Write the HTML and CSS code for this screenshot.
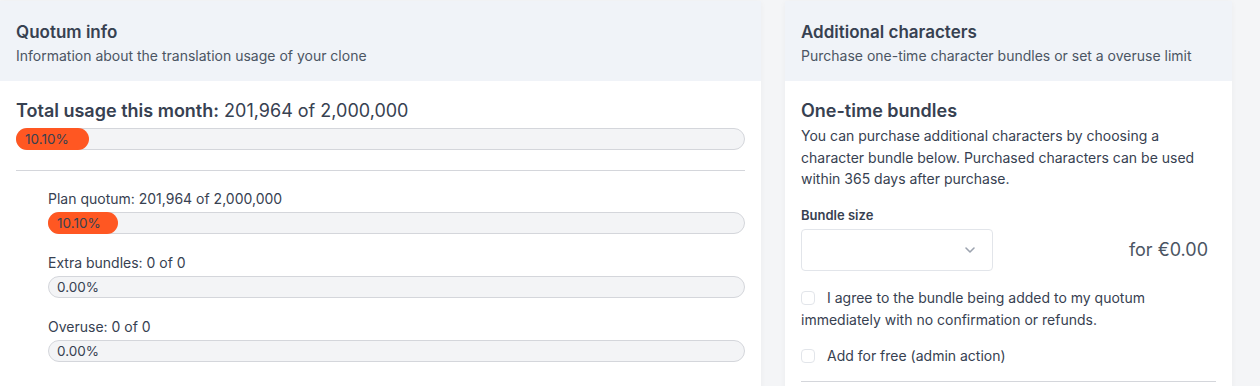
FILE: index.html
```html
<!DOCTYPE html>
<html lang="en">
<head>
<meta charset="utf-8">
<title>Quotum</title>
<link rel="stylesheet" href="styles.css">
</head>
<body>
<div class="page">
  <section class="card card-left">
    <header class="card-head">
      <h2 class="card-title">Quotum info</h2>
      <p class="card-sub">Information about the translation usage of your clone</p>
    </header>
    <div class="card-body">
      <div class="total"><strong>Total usage this month:</strong> 201,964 of 2,000,000</div>
      <div class="bar"><div class="fill" style="width:10.10%"></div><span class="bar-label">10.10%</span></div>
      <hr class="divider">
      <div class="sub-list">
        <div class="sub-item">
          <div class="sub-label">Plan quotum: 201,964 of 2,000,000</div>
          <div class="bar"><div class="fill" style="width:10.10%"></div><span class="bar-label">10.10%</span></div>
        </div>
        <div class="sub-item">
          <div class="sub-label">Extra bundles: 0 of 0</div>
          <div class="bar"><span class="bar-label">0.00%</span></div>
        </div>
        <div class="sub-item">
          <div class="sub-label">Overuse: 0 of 0</div>
          <div class="bar"><span class="bar-label">0.00%</span></div>
        </div>
      </div>
    </div>
  </section>
  <section class="card card-right">
    <header class="card-head">
      <h2 class="card-title">Additional characters</h2>
      <p class="card-sub">Purchase one-time character bundles or set a overuse limit</p>
    </header>
    <div class="card-body">
      <h3 class="section-title">One-time bundles</h3>
      <p class="section-text">You can purchase additional characters by choosing a character bundle below. Purchased characters can be used within 365 days after purchase.</p>
      <label class="field-label">Bundle size</label>
      <div class="select-row">
        <div class="select">
          <svg class="chev" width="12" height="8" viewBox="0 0 12 8"><path d="M2 2l4 4 4-4" fill="none" stroke="#9ca3af" stroke-width="1.6" stroke-linecap="round" stroke-linejoin="round"/></svg>
        </div>
        <div class="price">for €0.00</div>
      </div>
      <p class="check-line"><span class="checkbox"></span>I agree to the bundle being added to my quotum immediately with no confirmation or refunds.</p>
      <p class="check-line check-second"><span class="checkbox"></span>Add for free (admin action)</p>
      <hr class="divider bottom-divider">
    </div>
  </section>
</div>
</body>
</html>
```
FILE: styles.css
```css
* { box-sizing: border-box; }
html, body { margin: 0; padding: 0; }
body {
  background: #f4f5f7;
  font-family: Inter, "Noto Sans", "Liberation Sans", sans-serif;
  color: #374151;
  height: 386px;
  overflow: hidden;
}
.page {
  display: flex;
  gap: 24px;
  padding-top: 1px;
  align-items: flex-start;
}
.card {
  background: #fff;
  box-shadow: 0 1px 6px rgba(0,0,0,0.04);
  height: 400px;
}
.card-left { width: 761px; flex: none; }
.card-right { width: 447px; flex: none; }
.card-head {
  background: #f0f3f8;
  padding: 19px 16px 0;
  height: 80px;
}
.card-title {
  margin: 0;
  font-size: 17px;
  line-height: 24px;
  font-weight: 600;
  color: #374151;
}
.card-sub {
  margin: 2px 0 0;
  font-size: 14px;
  line-height: 20px;
  color: #4b5563;
}
.card-body { padding: 16px 16px 16px; }
.total {
  font-size: 18px;
  line-height: 28px;
  color: #374151;
}
.total strong { font-weight: 600; }
.bar {
  position: relative;
  height: 22px;
  margin-top: 3px;
  background: #f3f4f6;
  border: 1px solid #d4d6db;
  border-radius: 11px;
  display: flex;
  align-items: center;
}
.fill {
  position: absolute;
  left: -1px;
  top: -1px;
  bottom: -1px;
  background: #ff5722;
  border-radius: 11px;
}
.bar-label {
  position: relative;
  padding-left: 8px;
  font-size: 13.5px;
  line-height: 20px;
  color: #374151;
}
.divider {
  border: 0;
  border-top: 1px solid #d4d6db;
  margin: 20px 0 0;
}
.sub-list { padding-left: 32px; }
.sub-item { padding-top: 18px; }
.sub-item + .sub-item { padding-top: 19px; }
.sub-label {
  font-size: 14px;
  line-height: 20px;
  color: #374151;
}
.section-title {
  margin: 0;
  font-size: 18px;
  line-height: 28px;
  font-weight: 600;
  color: #374151;
}
.section-text {
  margin: 0;
  font-size: 14px;
  line-height: 21.5px;
  color: #374151;
}
.field-label {
  display: block;
  margin-top: 15px;
  font-size: 13px;
  line-height: 20px;
  font-weight: 600;
  color: #374151;
}
.select-row {
  margin-top: 4px;
  display: flex;
  align-items: center;
  justify-content: space-between;
}
.select {
  width: 192px;
  height: 42px;
  border: 1px solid #e2e5ea;
  border-radius: 4px;
  display: flex;
  align-items: center;
  justify-content: flex-end;
  padding-right: 16px;
}
.chev { display: block; }
.price {
  font-size: 18px;
  line-height: 28px;
  color: #4b5563;
  padding-right: 8px;
}
.check-line {
  margin: 16px 0 0;
  font-size: 14px;
  line-height: 22px;
  color: #374151;
}
.check-second { margin-top: 14px; }
.checkbox {
  display: inline-block;
  width: 14px;
  height: 14px;
  border: 1px solid #e2e5ea;
  border-radius: 4px;
  vertical-align: -2px;
  margin-right: 12px;
}
.bottom-divider { margin-top: 14px; }
```
